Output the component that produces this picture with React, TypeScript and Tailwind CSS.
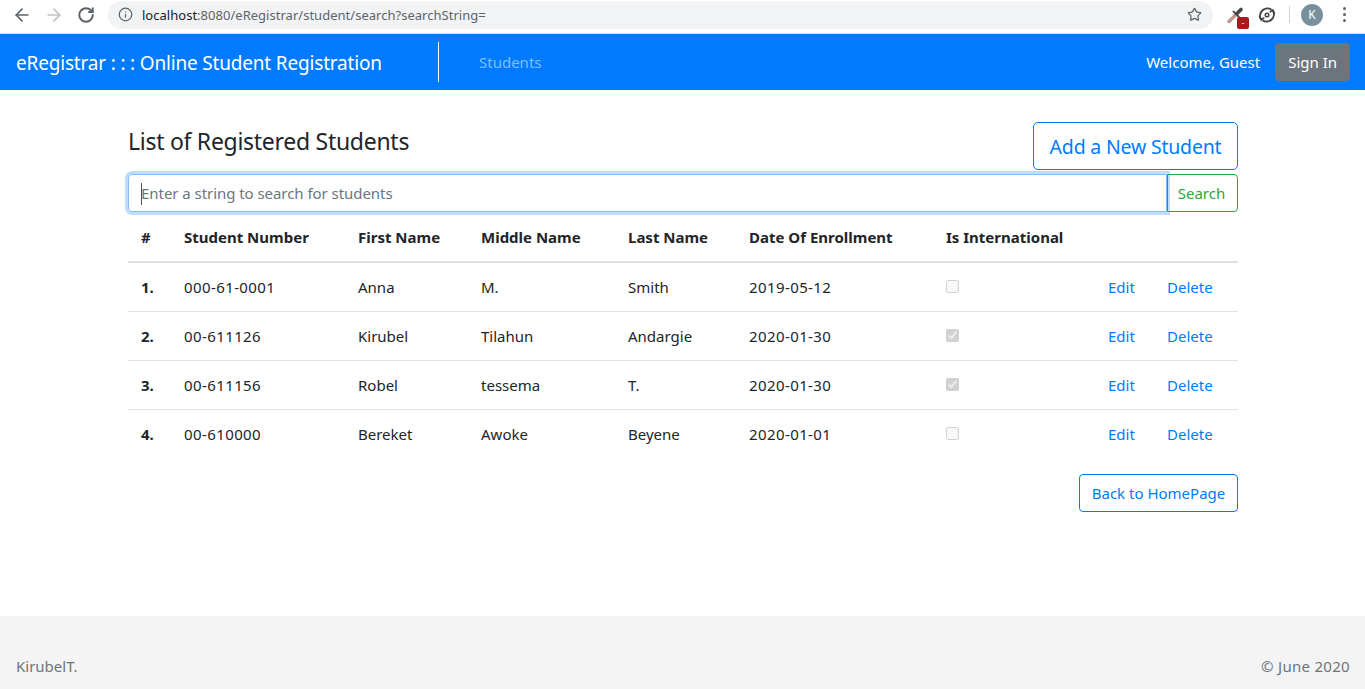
import { ArrowLeft, ArrowRight, Info, RotateCw, Star } from "lucide-react"

const students = [
  { n: "1.", num: "000-61-0001", first: "Anna", middle: "M.", last: "Smith", date: "2019-05-12", intl: false },
  { n: "2.", num: "00-611126", first: "Kirubel", middle: "Tilahun", last: "Andargie", date: "2020-01-30", intl: true },
  { n: "3.", num: "00-611156", first: "Robel", middle: "tessema", last: "T.", date: "2020-01-30", intl: true },
  { n: "4.", num: "00-610000", first: "Bereket", middle: "Awoke", last: "Beyene", date: "2020-01-01", intl: false },
]

const th = "h-[50px] border-b-2 border-[#dee2e6] pl-[13px]"

function BrowserBar() {
  return (
    <div className="flex h-[34px] items-center border-b border-[#dadce0] bg-white pb-[4px] text-[#5f6368]">
      <ArrowLeft size={20} strokeWidth={2} className="ml-[12px]" />
      <ArrowRight size={20} strokeWidth={2} className="ml-[12px] text-[#bdc1c6]" />
      <RotateCw size={18} strokeWidth={2.6} className="ml-[13px]" />
      <div className="ml-[13px] flex h-[28px] w-[1105px] items-center rounded-full bg-[#f1f3f4] pl-[10px] pr-[11px]">
        <Info size={15} strokeWidth={2} />
        <span className="ml-[9px] pt-[2px] text-[13px] tracking-[0.02px] text-[#5f6368]">
          <span className="text-[#202124]">localhost</span>:8080/eRegistrar/student/search?searchString=
        </span>
        <Star size={15} strokeWidth={2} className="ml-auto" />
      </div>
      <div className="relative ml-[13px] h-[20px] w-[20px]">
        <svg viewBox="0 0 20 20" className="h-[20px] w-[20px]" fill="none" strokeLinecap="round">
          <path d="M3 16.5 L10 9.5" stroke="#9a9a9a" strokeWidth="3.4" />
          <path d="M3.5 16 L10 9.5" stroke="#e08a8a" strokeWidth="2" />
          <path d="M7.5 6.5 L13 12" stroke="#555" strokeWidth="2" />
          <path d="M11 8.5 L15 4.5" stroke="#444" strokeWidth="3.6" />
        </svg>
        <span className="absolute left-[11px] top-[12px] flex h-[12px] w-[12px] items-center justify-center rounded-[2px] bg-[#a61c1c] text-[8px] leading-none text-white">
          -
        </span>
      </div>
      <svg viewBox="0 0 20 20" className="ml-[12px] h-[18px] w-[18px]" fill="none" stroke="#444" strokeWidth="2.2">
        <path d="M15 4.2A8 8 0 0 0 3.6 15" />
        <path d="M5 15.8A8 8 0 0 0 16.4 5" />
        <path d="M1.5 11.5L3.6 15.5L7 13" strokeWidth="1.8" />
        <path d="M18.5 8.5L16.4 4.5L13 7" strokeWidth="1.8" />
        <circle cx="10" cy="10" r="2" strokeWidth="1.6" />
      </svg>
      <div className="ml-[13px] h-[17px] w-px bg-[#d3d3d3]" />
      <div className="ml-[11px] flex h-[22px] w-[22px] items-center justify-center rounded-full bg-[#78909c] text-[12px] text-white">
        K
      </div>
      <div className="ml-[20px] flex flex-col gap-[3px]">
        <span className="h-[3px] w-[3px] rounded-full bg-[#5f6368]" />
        <span className="h-[3px] w-[3px] rounded-full bg-[#5f6368]" />
        <span className="h-[3px] w-[3px] rounded-full bg-[#5f6368]" />
      </div>
    </div>
  )
}

function Navbar() {
  return (
    <nav className="flex h-[56px] items-center bg-[#007bff] pl-[16px] pr-[15px] text-white">
      <span className="w-[422px] pt-[2px] text-[19px] tracking-[-0.18px]">
        eRegistrar : : : Online Student Registration
      </span>
      <div className="h-[40px] w-px bg-white" />
      <span className="ml-[40px] text-[#80bdff]">Students</span>
      <span className="ml-auto">Welcome, Guest</span>
      <button className="ml-[15px] h-[38px] rounded-[4px] bg-[#6c757d] px-[13px]">Sign In</button>
    </nav>
  )
}

function Checkbox({ checked }: { checked: boolean }) {
  return (
    <input
      type="checkbox"
      disabled
      checked={checked}
      readOnly
      className="mx-0 mb-[2px] mt-0 block h-[13px] w-[13px]"
    />
  )
}

export default function App() {
  return (
    <div className="flex min-h-[689px] flex-col bg-white font-['Noto_Sans',sans-serif] text-[15px] text-[#212529]">
      <BrowserBar />
      <Navbar />
      <main className="ml-[128px] mr-[127px] flex-1">
        <div className="mt-[32px] flex items-start justify-between">
          <h2 className="mt-[3px] text-[23px] leading-[32px] tracking-[-0.28px]">List of Registered Students</h2>
          <button className="h-[48px] w-[205px] rounded-[5px] border border-[#007bff] pt-[2px] text-[19.5px] tracking-[-0.2px] text-[#007bff]">
            Add a New Student
          </button>
        </div>
        <div className="mt-[4px] flex h-[38px]">
          <div className="relative z-10 flex h-[38px] w-[1039px] items-center rounded-l-[4px] border border-[#80bdff] pl-[12px] pt-[1px] text-[#6c757d] shadow-[0_0_0_3px_rgba(0,123,255,0.25)]">
            <span className="h-[22px] w-px bg-[#495057]" />
            <span className="-ml-px tracking-[-0.05px]">Enter a string to search for students</span>
          </div>
          <button className="w-[71px] rounded-r-[4px] border border-[#28a745] pr-[2px] text-[#28a745]">Search</button>
        </div>
        <table className="mt-[1px] w-full table-fixed border-separate border-spacing-0">
          <thead>
            <tr className="text-left font-bold">
              <th className={`w-[43px] ${th}`}>#</th>
              <th className={`w-[174px] ${th}`}>Student Number</th>
              <th className={`w-[123px] ${th}`}>First Name</th>
              <th className={`w-[147px] ${th}`}>Middle Name</th>
              <th className={`w-[121px] ${th}`}>Last Name</th>
              <th className={`w-[197px] ${th}`}>Date Of Enrollment</th>
              <th className={`w-[162px] ${th}`}>Is International</th>
              <th className={`w-[59px] ${th}`} />
              <th className={th} />
            </tr>
          </thead>
          <tbody>
            {students.map((s, i) => {
              const td =
                i === 3
                  ? "h-[49px] border-b border-transparent pl-[13px]"
                  : "h-[49px] border-b border-[#dee2e6] pl-[13px]"
              return (
                <tr key={s.n}>
                  <td className={`font-bold ${td}`}>{s.n}</td>
                  <td className={`tracking-[0.4px] ${td}`}>{s.num}</td>
                  <td className={td}>{s.first}</td>
                  <td className={td}>{s.middle}</td>
                  <td className={td}>{s.last}</td>
                  <td className={`tracking-[0.4px] ${td}`}>{s.date}</td>
                  <td className={td}>
                    <Checkbox checked={s.intl} />
                  </td>
                  <td className={`text-[#007bff] ${td}`}>Edit</td>
                  <td className={`text-[#007bff] ${td}`}>Delete</td>
                </tr>
              )
            })}
          </tbody>
        </table>
        <div className="mt-[15px] flex justify-end">
          <button className="h-[38px] w-[159px] rounded-[4px] border border-[#007bff] text-[#007bff]">
            Back to HomePage
          </button>
        </div>
      </main>
      <footer className="flex h-[73px] items-end justify-between bg-[#f4f4f4] px-[16px] pb-[12px] pr-[15px] text-[#6c757d]">
        <span>KirubelT.</span>
        <span className="tracking-[0.3px]">© June 2020</span>
      </footer>
    </div>
  )
}
